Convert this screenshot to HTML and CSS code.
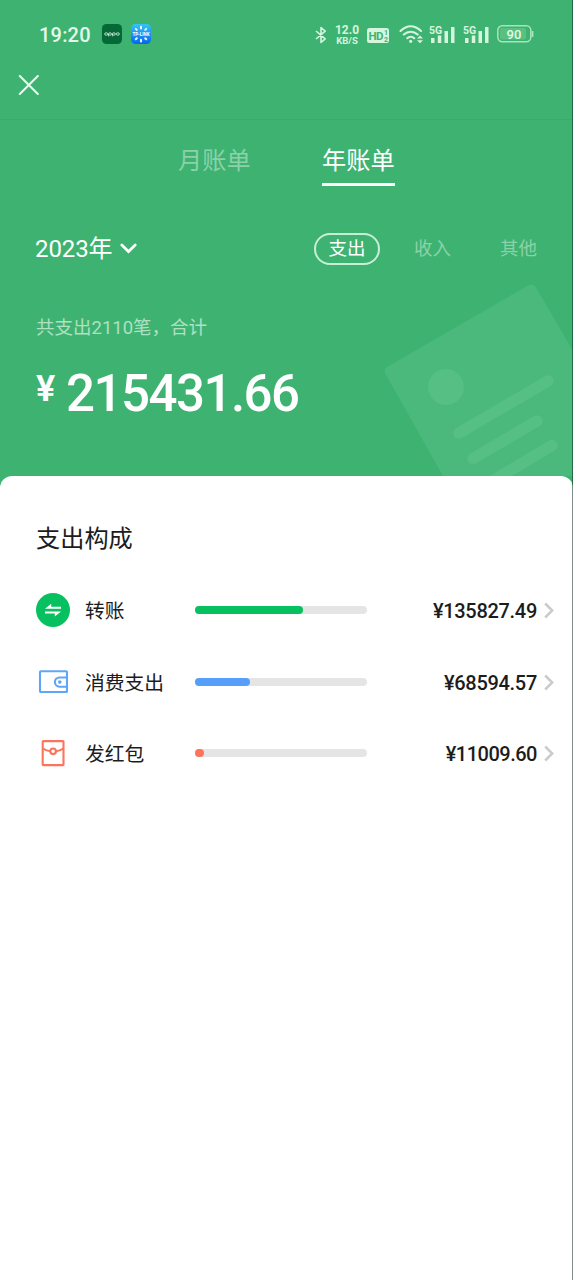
FILE: index.html
```html
<!DOCTYPE html>
<html lang="zh-CN">
<head>
<meta charset="utf-8">
<title>年账单</title>
<link rel="stylesheet" href="styles.css">
</head>
<body>
<div class="screen">
  <header class="status">
    <span class="time">19:20</span>
    <svg class="app oppo" width="20" height="20" viewBox="0 0 20 20"><rect width="20" height="20" rx="4.5" fill="#046937"/><g fill="none" stroke="#c9e8d3" stroke-width=".9"><ellipse cx="4.2" cy="10" rx="1.6" ry="1.2"/><ellipse cx="8" cy="10" rx="1.5" ry="1.2"/><ellipse cx="11.9" cy="10" rx="1.5" ry="1.2"/><ellipse cx="15.8" cy="10" rx="1.6" ry="1.2"/><path d="M6.5 10v2.3M10.4 10v2.3"/></g></svg>
    <svg class="app" width="20" height="20" viewBox="0 0 20 20"><defs><linearGradient id="sky" x2="0" y2="1"><stop stop-color="#35c4f5"/><stop offset="1" stop-color="#0865ee"/></linearGradient></defs><rect width="20" height="20" rx="4.5" fill="url(#sky)"/><g stroke="#e8f8ff" stroke-width="2" stroke-linecap="round"><path d="M10 2.8v1.6M10 15.8v1.6M4.8 4.9l1 1M15.2 4.9l-1 1M4.8 15.3l1-1M15.2 15.3l-1-1"/></g><text x="10" y="12" text-anchor="middle" textLength="17" lengthAdjust="spacingAndGlyphs" class="tplink">TP-LINK</text></svg>
    <span class="space"></span>
    <svg class="bt" width="14" height="18" viewBox="0 0 14 18"><path d="M2 5l9.2 7.8L7 16.5v-15l4.2 3.7L2 13" fill="none" stroke="#d6f5df" stroke-width="1.6" stroke-linejoin="round"/></svg>
    <span class="speed"><b>12.0</b><b>KB/S</b></span>
    <svg class="hd" width="22" height="15" viewBox="0 0 22 15"><rect width="22" height="15" rx="2.5" fill="#d6f5df"/><text x="1.6" y="12" class="hd-big">HD</text><text x="17" y="6.500" class="hd-small">1</text><text x="17" y="13.800" class="hd-small">2</text></svg>
    <svg class="wifi" width="25" height="19" viewBox="0 0 25 19"><g fill="none" stroke="#d6f5df" stroke-width="2.1" stroke-linecap="round"><path d="M1.500 6C8-.2 15.500-.2 22 6M4.800 9.600c4.200-3.900 9.700-3.900 13.900 0M8.300 13.200c2-1.900 4.900-1.900 6.900 0"/></g><circle cx="11.700" cy="16.300" r="1.600" fill="#d6f5df"/><path d="M18 13.500l3-3 3 3zM18 15.200l3 3 3-3z" fill="#d6f5df"/></svg>
    <svg class="signal" width="26" height="20" viewBox="0 0 26 20"><path d="M2 13h3.500v5H2zM8.800 10.500h3.500V18H8.800zM15.500 6h3.500v12h-3.500zM22 2h3.500v16H22z" fill="#d6f5df"/><text x="0" y="8.800" class="five">5G</text></svg>
    <svg class="signal second" width="26" height="20" viewBox="0 0 26 20"><path d="M2 13h3.500v5H2zM8.800 10.500h3.500V18H8.800zM15.500 6h3.500v12h-3.500zM22 2h3.500v16H22z" fill="#d6f5df"/><text x="0" y="8.800" class="five">5G</text></svg>
    <svg class="battery" width="37" height="18" viewBox="0 0 37 18"><rect x=".8" y=".8" width="33" height="16" rx="4.500" fill="none" stroke="#a5e5b9" stroke-width="1.500"/><rect x="3" y="3" width="26" height="11.600" rx="2" fill="#58c180"/><path d="M35.500 6v6" stroke="#a5e5b9" stroke-width="1.800"/><text x="17" y="13.700" text-anchor="middle" class="charge">90</text></svg>
  </header>
  <nav class="nav">
    <svg width="21" height="20" viewBox="0 0 21 20"><path d="M1.800 1l18 18M19.800 1l-18 18" stroke="#e9fbef" stroke-width="2" stroke-linecap="round"/></svg>
  </nav>
  <section class="hero">
    <svg class="art" width="189" height="206" viewBox="0 0 189 206"><path d="M3 97L144 15.500q5-3 8 2L189 81v125H59L1.500 104q-2.500-4.500 1.500-7z" fill="#4ab97b"/><g fill="none" stroke="#55bf84" stroke-width="11.500" stroke-linecap="round"><path d="M75 163L164 111M89 188.500L153 151M100 216L168 175.500"/></g><circle cx="62" cy="117" r="18" fill="#55bf84"/></svg>
    <div class="tabs"><span class="tab">月账单</span><span class="tab active">年账单</span></div>
    <div class="filters">
      <span class="year">2023年</span>
      <svg class="down" width="17" height="11" viewBox="0 0 17 11"><path d="M1.800 2l6.700 6.500L15.200 2" fill="none" stroke="#fff" stroke-width="2.700" stroke-linecap="round"/></svg>
      <span class="space"></span>
      <span class="pill">支出</span><span class="kind">收入</span><span class="kind last">其他</span>
    </div>
    <p class="caption">共支出2110笔，合计</p>
    <p class="total"><span class="yen">¥</span><span class="sum">215431.66</span></p>
  </section>
  <main class="sheet">
    <h1 class="title">支出构成</h1>
    <div class="row">
      <svg class="icon" width="34" height="34" viewBox="0 0 34 34"><circle cx="17" cy="17" r="17" fill="#07c160"/><path d="M9 15.700l6.200-4.900v2.900H25v2zM25 18.600l-6.200 4.900v-2.900H9v-2z" fill="#fff"/></svg>
      <span class="name">转账</span>
      <span class="bar"><span class="fill green" style="width:108px"></span></span>
      <span class="amount">¥135827.49</span>
      <svg class="next" width="10" height="17" viewBox="0 0 10 17"><path d="M1.200 1.500l7 7-7 7" fill="none" stroke="#cbcbcb" stroke-width="2.500"/></svg>
    </div>
    <div class="row">
      <svg class="icon" width="34" height="34" viewBox="0 0 34 34"><g fill="none" stroke="#5fa6f5" stroke-width="2.100"><rect x="4" y="6.200" width="27" height="20.800" rx=".8"/><path d="M31 12.500h-7.500a4.600 4.600 0 0 0 0 9.200H31"/></g><circle cx="23.800" cy="17.100" r="1.800" fill="#5fa6f5"/></svg>
      <span class="name">消费支出</span>
      <span class="bar"><span class="fill blue" style="width:54.500px"></span></span>
      <span class="amount">¥68594.57</span>
      <svg class="next" width="10" height="17" viewBox="0 0 10 17"><path d="M1.200 1.500l7 7-7 7" fill="none" stroke="#cbcbcb" stroke-width="2.500"/></svg>
    </div>
    <div class="row">
      <svg class="icon" width="34" height="34" viewBox="0 0 34 34"><g fill="none" stroke="#fa7559" stroke-width="2.100"><rect x="6.700" y="5.100" width="20.800" height="24" rx=".6"/><path d="M7 12.500q3.500 2.500 7.400 2.700M27.400 12.500q-3.500 2.500-7.400 2.700"/><circle cx="17.100" cy="15.300" r="2.800"/></g></svg>
      <span class="name">发红包</span>
      <span class="bar"><span class="fill red" style="width:9px"></span></span>
      <span class="amount narrow">¥11009.60</span>
      <svg class="next" width="10" height="17" viewBox="0 0 10 17"><path d="M1.200 1.500l7 7-7 7" fill="none" stroke="#cbcbcb" stroke-width="2.500"/></svg>
    </div>
  </main>
  <div class="edge"></div>
</div>
</body>
</html>
```
FILE: styles.css
```css
* { box-sizing: border-box; }
body { margin: 0; font-family: Roboto, "Noto Sans CJK SC", sans-serif; }
svg { display: block; flex: none; }
.screen { position: relative; width: 573px; height: 1280px; background: #3eb371; display: flex; flex-direction: column; overflow: hidden; }
.space { flex: 1; }
.status { height: 68px; display: flex; align-items: center; padding: 0 39px 0 39px; color: #e3faea; }
.time { font-size: 20px; font-weight: 500; letter-spacing: .2px; width: 63px; line-height: 24px; margin-top: 2px; }
.app { margin-right: 9px; }
.tplink { font: 700 4.5px Roboto, sans-serif; fill: #fff; }
.bt { margin: 1px 6px 0 0; }
.speed { width: 26px; display: flex; flex-direction: column; align-items: center; font-size: 9.5px; line-height: 10px; color: #d6f5df; margin-top: 2px; }
.speed b:first-child { font-size: 12px; line-height: 12px; }
.hd { margin: 2px 10px 0 7px; }
.hd-big { font: 700 11.5px Roboto, sans-serif; fill: #3eb371; letter-spacing: -.8px; }
.hd-small { font: 700 7px Roboto, sans-serif; fill: #3eb371; }
.wifi { margin-right: 5px; }
.signal { margin: 2px 8px 0 0; }
.five { font: 700 10.5px Roboto, sans-serif; fill: #d6f5df; stroke: #3eb371; stroke-width: 1.5px; paint-order: stroke; }
.charge { font: 500 13px Roboto, sans-serif; fill: #e3faea; }
.nav { height: 52px; padding: 7px 18px; border-bottom: 1px solid #3bab6b; }
.hero { position: relative; height: 356px; color: #fff; }
.art { position: absolute; right: 0; bottom: 0; }
.tabs { display: flex; padding: 24px 0 0 178px; gap: 71px; font-size: 24.2px; line-height: 34px; }
.tab { width: 73px; height: 42px; color: #8bd1a9; }
.tab.active { color: #fff; border-bottom: 3px solid #fff; }
.filters { display: flex; align-items: center; margin-top: 46px; height: 33px; padding: 0 36px 0 35px; }
.year { font-size: 24px; letter-spacing: -.1px; line-height: 33px; margin-top: 2px; }
.down { margin: 0 0 0 8px; }
.pill { width: 66px; height: 32px; border: 2px solid #c8efd6; border-radius: 16px; text-align: center; font-size: 18.5px; line-height: 28px; }
.kind { font-size: 18.5px; color: #8bd1a9; margin-left: 34px; line-height: 30px; }
.kind.last { margin-left: 49px; }
.caption { margin: 50px 0 0 36px; font-size: 18.5px; line-height: 26px; color: #aee0c2; }
.total { margin: 21px 0 0 36px; display: flex; font-weight: 500; }
.yen { font-size: 36px; line-height: 54px; width: 30px; font-weight: 600; }
.sum { font-size: 51px; line-height: 63px; letter-spacing: -1.5px; }
.sheet { flex: 1; background: #fff; border-radius: 12px 12px 0 0; padding: 45px 19px 0 36px; color: #1c1c1c; }
.title { margin: 0 0 18.6px; font-size: 24.2px; font-weight: 400; line-height: 36px; }
.row { display: flex; align-items: center; height: 69px; margin-bottom: 2.6px; }
.name { width: 110px; margin: -1px 0 0 15px; font-size: 19.8px; }
.bar { width: 172px; height: 8px; border-radius: 4px; background: #e5e5e5; }
.fill { display: block; height: 8px; border-radius: 4px; }
.green { background: #07c160; }
.blue { background: #559ffb; }
.red { background: #fa7559; }
.amount { flex: 1; text-align: right; font-size: 20px; font-weight: 500; letter-spacing: -.3px; padding-top: 2px; }
.amount.narrow { letter-spacing: -.5px; }
.next { margin: 1px 0 0 7px; }
.edge { position: absolute; right: 0; top: 0; width: 1px; height: 1280px; background: rgba(0, 30, 20, .5); }
```
